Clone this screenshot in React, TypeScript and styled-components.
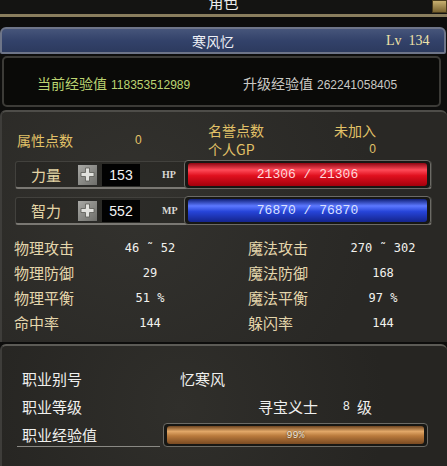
import React from "react";
import styled, { createGlobalStyle } from "styled-components";

const GlobalStyle = createGlobalStyle`
  html, body {
    margin: 0;
    padding: 0;
    background: #1b1a18;
  }
  body {
    font-family: "Noto Sans CJK SC", "Liberation Sans", sans-serif;
  }
`;

const Window = styled.div`
  width: 447px;
  height: 466px;
  overflow: hidden;
  display: flex;
  flex-direction: column;
  background: #0d0d0c;
`;

const TitleBar = styled.div`
  position: relative;
  height: 14px;
  overflow: hidden;
  background: #141412;
  border-bottom: 3px solid #8a7e5e;
  display: flex;
  justify-content: center;
  align-items: flex-end;
`;

const TitleText = styled.span`
  font-size: 15px;
  line-height: 16px;
  margin-bottom: 4px;
  color: #ececec;
`;

const CloseIcon = styled.div`
  position: absolute;
  right: 0;
  top: 0;
  width: 13px;
  height: 11px;
  background: linear-gradient(#c8b070, #7a6430);
  border: 1px solid #4a3c1c;
`;

const NameBar = styled.div`
  margin: 10px 1px 0 0;
  height: 23px;
  border: 2px solid #6e7588;
  border-radius: 6px 6px 2px 2px;
  background: linear-gradient(#46557a, #33426a 50%, #2c3a5e);
  display: flex;
  align-items: center;
`;

const CharName = styled.span`
  flex: 1;
  text-align: center;
  font-size: 14px;
  color: #eef0f6;
  padding-left: 38px;
`;

const Level = styled.span`
  width: 58px;
  font-family: "Liberation Serif", serif;
  font-size: 14px;
  color: #efe2a8;
  white-space: pre;
`;

const ExpPanel = styled.div`
  margin: 2px 6px 0 2px;
  height: 45px;
  border: 2px solid #3c3b37;
  border-radius: 5px;
  background: #0a0a08;
  display: flex;
  align-items: center;
  padding-left: 33px;
  padding-top: 2px;
`;

const ExpItem = styled.div<{ $color: string; $width?: number }>`
  width: ${(p) => (p.$width ? `${p.$width}px` : "auto")};
  color: ${(p) => p.$color};
  font-size: 14px;
  display: flex;
  align-items: baseline;
  gap: 4px;
`;

const ExpNumber = styled.span`
  font-family: "Liberation Sans", sans-serif;
  font-size: 12px;
`;

const StatPanel = styled.div`
  margin-top: 3px;
  height: 230px;
  border-top: 2px solid #4e4d49;
  border-left: 2px solid #3e3d3a;
  border-radius: 6px 6px 0 0;
  background: radial-gradient(circle at 30% 40%, #33322e, #292825 70%);
  display: flex;
  flex-direction: column;
`;

const PointsGrid = styled.div`
  margin: 9px 0 0 15px;
  display: grid;
  grid-template-columns: 118px 73px 122px 46px;
  grid-template-rows: 19px 19px;
  align-items: center;
  color: #e2c268;
  font-size: 14px;
`;

const PointsCell = styled.div<{ $span?: boolean; $right?: boolean; $mono?: boolean }>`
  grid-row: ${(p) => (p.$span ? "1 / span 2" : "auto")};
  text-align: ${(p) => (p.$right ? "right" : "left")};
  font-family: ${(p) =>
    p.$mono ? '"Liberation Sans", sans-serif' : '"Noto Sans CJK SC", sans-serif'};
  font-size: ${(p) => (p.$mono ? "12px" : "14px")};
  line-height: 19px;
`;

const AttrRow = styled.div<{ $gap: number }>`
  margin: ${(p) => p.$gap}px 0 0 13px;
  width: 415px;
  height: 25px;
  border: 1px solid #42413d;
  border-bottom: 2px solid #7a7873;
  border-radius: 3px;
  display: flex;
  align-items: center;
  background: rgba(0, 0, 0, 0.12);
`;

const AttrLabel = styled.span`
  width: 46px;
  padding-left: 15px;
  font-size: 15px;
  color: #e4d4a4;
`;

const PlusButton = styled.div`
  width: 21px;
  height: 22px;
  box-sizing: border-box;
  border: 1px solid #2a2a28;
  background: linear-gradient(135deg, #a8a8a4, #6e6e6a);
  display: flex;
  align-items: center;
  justify-content: center;
`;

const AttrValue = styled.div`
  margin-left: 4px;
  width: 38px;
  height: 22px;
  background: #020202;
  color: #f4f4f4;
  font-family: "Liberation Sans", sans-serif;
  font-size: 14px;
  line-height: 22px;
  text-align: center;
`;

const BarTag = styled.span`
  margin-left: 22px;
  width: 22px;
  font-family: "Liberation Serif", serif;
  font-weight: bold;
  font-size: 10px;
  color: #d8d8d4;
`;

const BarFrame = styled.div<{ $height: number }>`
  flex: 1;
  height: ${(p) => p.$height}px;
  border: 1px solid #6c6b66;
  border-radius: 4px;
  padding: 2px 3px;
  background: #171714;
  display: flex;
`;

const Bar = styled.div<{ $tone: "red" | "blue" | "orange" }>`
  flex: 1;
  border-radius: 3px;
  display: flex;
  align-items: center;
  justify-content: center;
  font-family: "Liberation Mono", monospace;
  background: ${(p) =>
    p.$tone === "red"
      ? "linear-gradient(#8e0612, #ff4a58 30%, #e0101e 55%, #a4000c)"
      : p.$tone === "blue"
      ? "linear-gradient(#102078, #5c78ff 30%, #2644d8 55%, #14248c)"
      : "linear-gradient(#6e4420, #e2a868 30%, #b97a3c 55%, #7a4a22)"};
  color: ${(p) =>
    p.$tone === "red" ? "#ffd8dc" : p.$tone === "blue" ? "#dce2ff" : "#efe4d4"};
  font-size: ${(p) => (p.$tone === "orange" ? "10px" : "13px")};
  text-shadow: ${(p) => (p.$tone === "orange" ? "0 0 2px #3a2008" : "none")};
`;

const StatsWrap = styled.div`
  margin: 10px 0 0 12px;
  display: flex;
  gap: 48px;
`;

const StatGroup = styled.div<{ $label: number }>`
  display: grid;
  grid-template-columns: ${(p) => p.$label}px 100px;
  grid-auto-rows: 25px;
  align-items: center;
`;

const StatLabel = styled.span`
  font-size: 15px;
  color: #e4d6ac;
`;

const StatValue = styled.span`
  text-align: center;
  font-family: "DejaVu Sans Mono", monospace;
  font-size: 12px;
  color: #f2f2ee;
  white-space: pre;
`;

const JobPanel = styled.div`
  flex: 1;
  margin-top: 2px;
  border-top: 2px solid #5c5b56;
  border-left: 2px solid #3e3d3a;
  border-radius: 6px 6px 0 0;
  background: radial-gradient(circle at 40% 50%, #302f2b, #262522 75%);
  padding-top: 18px;
  display: flex;
  flex-direction: column;
`;

const JobRow = styled.div<{ $height: number }>`
  height: ${(p) => p.$height}px;
  display: flex;
  align-items: center;
  color: #f0f0ee;
  font-size: 15px;
`;

const JobLabel = styled.span<{ $width: number }>`
  width: ${(p) => p.$width}px;
  padding-left: 20px;
`;

const JobText = styled.span<{ $width?: number }>`
  width: ${(p) => (p.$width ? `${p.$width}px` : "auto")};
`;

const JobNum = styled.span`
  font-family: "Liberation Sans", sans-serif;
  font-size: 12px;
  width: 14px;
`;

const ExpLabel = styled.span`
  margin-left: 15px;
  width: 138px;
  padding-left: 5px;
  border-bottom: 1px solid #8a8984;
  line-height: 22px;
`;

const JobBarWrap = styled.div`
  margin-left: 3px;
  width: 265px;
  display: flex;
`;

const PlusIcon = () => (
  <svg width="15" height="15" viewBox="0 0 15 15">
    <path d="M5.5 1h4v4.5H14v4H9.5V14h-4V9.5H1v-4h4.5z" fill="#e2e2de" stroke="#5a5a56" strokeWidth="0.8" />
  </svg>
);

const attrs = [
  { label: "力量", value: "153", tag: "HP", tone: "red" as const, text: "21306 / 21306", gap: 2 },
  { label: "智力", value: "552", tag: "MP", tone: "blue" as const, text: "76870 / 76870", gap: 8 },
];

const leftStats = [
  ["物理攻击", "46 ˜ 52"],
  ["物理防御", "29"],
  ["物理平衡", "51 %"],
  ["命中率", "144"],
];

const rightStats = [
  ["魔法攻击", "270 ˜ 302"],
  ["魔法防御", "168"],
  ["魔法平衡", "97 %"],
  ["躲闪率", "144"],
];

export default function App() {
  return (
    <Window>
      <GlobalStyle />
      <TitleBar>
        <TitleText>角色</TitleText>
        <CloseIcon />
      </TitleBar>

      <NameBar>
        <CharName>寒风忆</CharName>
        <Level>Lv  134</Level>
      </NameBar>

      <ExpPanel>
        <ExpItem $color="#bcd472" $width={206}>
          当前经验值<ExpNumber>118353512989</ExpNumber>
        </ExpItem>
        <ExpItem $color="#c9c9c4">
          升级经验值<ExpNumber>262241058405</ExpNumber>
        </ExpItem>
      </ExpPanel>

      <StatPanel>
        <PointsGrid>
          <PointsCell $span>属性点数</PointsCell>
          <PointsCell $span $mono>0</PointsCell>
          <PointsCell>名誉点数</PointsCell>
          <PointsCell $right>未加入</PointsCell>
          <PointsCell>个人GP</PointsCell>
          <PointsCell $right $mono>0</PointsCell>
        </PointsGrid>

        {attrs.map((a) => (
          <AttrRow key={a.label} $gap={a.gap}>
            <AttrLabel>{a.label}</AttrLabel>
            <PlusButton>
              <PlusIcon />
            </PlusButton>
            <AttrValue>{a.value}</AttrValue>
            <BarTag>{a.tag}</BarTag>
            <BarFrame $height={23}>
              <Bar $tone={a.tone}>{a.text}</Bar>
            </BarFrame>
          </AttrRow>
        ))}

        <StatsWrap>
          <StatGroup $label={86}>
            {leftStats.map(([l, v]) => (
              <React.Fragment key={l}>
                <StatLabel>{l}</StatLabel>
                <StatValue>{v}</StatValue>
              </React.Fragment>
            ))}
          </StatGroup>
          <StatGroup $label={85}>
            {rightStats.map(([l, v]) => (
              <React.Fragment key={l}>
                <StatLabel>{l}</StatLabel>
                <StatValue>{v}</StatValue>
              </React.Fragment>
            ))}
          </StatGroup>
        </StatsWrap>
      </StatPanel>

      <JobPanel>
        <JobRow $height={28}>
          <JobLabel $width={158}>职业别号</JobLabel>
          <JobText>忆寒风</JobText>
        </JobRow>
        <JobRow $height={28}>
          <JobLabel $width={236}>职业等级</JobLabel>
          <JobText $width={85}>寻宝义士</JobText>
          <JobNum>8</JobNum>
          <JobText>级</JobText>
        </JobRow>
        <JobRow $height={30}>
          <ExpLabel>职业经验值</ExpLabel>
          <JobBarWrap>
            <BarFrame $height={18}>
              <Bar $tone="orange">99%</Bar>
            </BarFrame>
          </JobBarWrap>
        </JobRow>
      </JobPanel>
    </Window>
  );
}
